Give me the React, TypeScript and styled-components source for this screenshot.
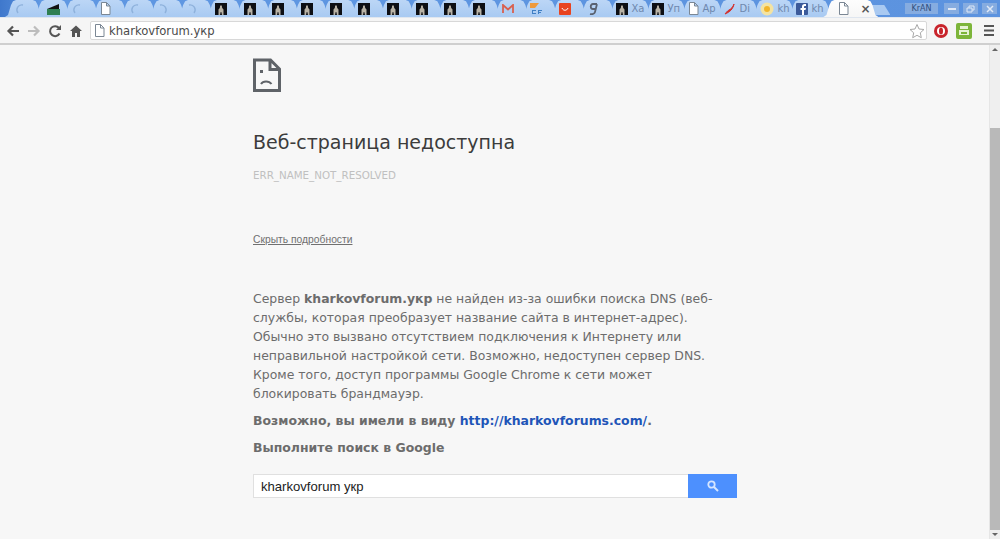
import React from "react";
import styled, { createGlobalStyle } from "styled-components";

const Global = createGlobalStyle`
  html, body { margin: 0; padding: 0; height: 100%; overflow: hidden; background: #f7f7f7; }
  #root { height: 100%; }
`;

const Shell = styled.div`
  width: 1000px; height: 539px; display: flex; flex-direction: column; overflow: hidden;
  font-family: "DejaVu Sans", sans-serif;
`;
const TabStrip = styled.div`
  height: 18px; flex: none; display: flex; align-items: flex-end; padding-left: 5px; box-sizing: border-box;
  background: linear-gradient(90deg, #3f78cc 0, #5f97e2 4%, #5c93df 100%);
  border-bottom: 1px solid #dfe6ef;
`;
const Tab = styled.div<{ $w: number; $active?: boolean }>`
  width: ${p => p.$w + 10}px; height: 17px; flex: none; display: flex; align-items: center; gap: 3px;
  margin-right: -10px; position: relative;
  padding-left: ${p => (p.$active ? 15 : 9)}px; box-sizing: border-box; overflow: hidden;
  background: ${p => (p.$active ? "linear-gradient(#fdfdfd,#f6f6f6)" : "linear-gradient(#bcd6f6,#a8caf2)")};
  clip-path: polygon(0 100%, 3px 88%, 6px 30%, 8px 8%, 11px 0, calc(100% - 11px) 0, calc(100% - 8px) 8%, calc(100% - 6px) 30%, calc(100% - 3px) 88%, 100% 100%);
  font-size: 10px; color: #6f88ad;
  z-index: ${p => (p.$active ? 2 : 1)};
`;
const TabGlyph = styled.svg<{ $shift?: number }>`
  flex: none; margin-left: ${p => p.$shift ?? 0}px;
`;
const CloseMark = styled.span` margin-left: 8px; color: #555; font-size: 12px; font-weight: 700; `;
const NewTab = styled.div`
  width: 22px; height: 10px; margin: 0 0 2px 0; background: #a9c9f1; flex: none;
  clip-path: polygon(0 0, 72% 0, 100% 100%, 14% 100%);
`;
const Spacer = styled.div` flex: 1; `;
const User = styled.div`
  width: 33px; height: 11px; margin: 3px 6px 0 0; background: #86ace0; color: #2f4e7c; flex: none;
  font-size: 8px; display: flex; align-items: center; justify-content: center; align-self: flex-start;
`;
const WinButtons = styled.div` display: flex; gap: 4px; align-self: flex-start; margin: 3px 3px 0 0; `;
const WinButton = styled.div`
  width: 15px; height: 11px; background: #86ace0; display: flex; align-items: center; justify-content: center;
`;
const Toolbar = styled.div`
  height: 25px; flex: none; display: flex; align-items: center; box-sizing: border-box;
  background: #f5f5f5; padding-left: 6px;
`;
const NavIcon = styled.svg` width: 14px; height: 14px; flex: none; margin-right: 7px; `;
const Omnibox = styled.div`
  width: 837px; height: 19px; margin: 0 6px 0 0; box-sizing: border-box; flex: none; background: #fff;
  border: 1px solid #d8d8d8; border-radius: 2px; display: flex; align-items: center; padding: 0 1px 0 3px; gap: 4px;
  font-size: 11.6px; color: #4a4a4a;
`;
const Url = styled.span` flex: 1; `;
const RightIcon = styled.svg` width: 16px; height: 16px; flex: none; margin-right: 7px; `;
const MenuIcon = styled.svg` width: 12px; height: 11px; flex: none; margin-left: 4px; `;
const Divider = styled.div` height: 2px; flex: none; background: #cfcfcf; `;
const Viewport = styled.div` flex: 1; min-height: 0; display: flex; background: #f7f7f7; `;
const Page = styled.main` flex: 1; padding: 13px 0 0 253px; color: #6c6c6c; overflow: hidden; `;
const Column = styled.div` width: 484px; `;
const SadIcon = styled.svg` width: 28px; height: 34px; display: block; `;
const Title = styled.h1`
  margin: 37px 0 0; font-size: 19px; line-height: 26px; font-weight: 400; color: #3c3c3c;
`;
const Code = styled.div` margin-top: 13px; font-size: 10.3px; line-height: 14px; color: #c0c0c0; `;
const Details = styled.div`
  margin-top: 51px; font: 10.3px/14px "Liberation Sans", Arial, sans-serif; color: #707070; text-decoration: underline;
`;
const Para = styled.p` margin: 0; font-size: 12.45px; line-height: 19px; `;
const Explain = styled(Para)` margin-top: 42px; width: 470px; `;
const Strong = styled(Para)` margin-top: 8px; font-weight: 700; `;
const Link = styled.span` color: #1f55b8; `;
const SearchRow = styled.div` display: flex; height: 24px; margin-top: 17px; `;
const SearchInput = styled.div`
  flex: 1; box-sizing: border-box; background: #fff; border: 1px solid #e0e0e0; border-right: 0;
  padding-left: 7px; display: flex; align-items: center; font: 13.1px "Liberation Sans", Arial, sans-serif; color: #222;
`;
const SearchButton = styled.div`
  width: 49px; background: #4d90fe; display: flex; align-items: center; justify-content: center;
`;
const ScrollTrack = styled.div`
  width: 11px; flex: none; background: #efefef; border-left: 1px solid #e6e6e6; display: flex; flex-direction: column; box-sizing: border-box;
`;
const ScrollArrow = styled.div<{ $up?: boolean }>`
  height: 9px; flex: none; display: flex; align-items: center; justify-content: center;
  &::after {
    content: ""; border-left: 3px solid transparent; border-right: 3px solid transparent;
    ${p => (p.$up ? "border-bottom: 3px solid #666;" : "border-top: 3px solid #666;")}
  }
`;
const ScrollGap = styled.div` height: 74px; flex: none; `;
const ScrollThumb = styled.div` flex: 1; background: #b9b9b9; `;

const Doc = () => (
  <TabGlyph width="11" height="13" viewBox="0 0 11 13"><path d="M1.500.5h5l3.500 3.500v8.500h-8.500z M6.500.5v3.500h3.500" fill="#fff" stroke="#7b8794" /></TabGlyph>
);
const Spin = ({ flip }: { flip?: boolean }) => (
  <TabGlyph width="12" height="12" viewBox="0 0 12 12"><path d={flip ? "M3 2a5 5 0 0 1 5 8" : "M9 2a5 5 0 0 0-5 8"} fill="none" stroke="#8fb2dc" strokeWidth="1.400" /></TabGlyph>
);
const Dark = () => (
  <TabGlyph width="12" height="12" viewBox="0 0 12 12"><rect width="12" height="12" fill="#0d0f14" /><path d="M5.200 2.500h1.600l.4 2.500 1.300 1.500V12h-1.500l-.7-3h-.6l-.7 3H3.500V6.500L4.800 5z" fill="#b9b3a6" /></TabGlyph>
);
const Green = () => (
  <TabGlyph $shift={3} width="14" height="12" viewBox="0 0 14 12"><path d="M1 6 13 1v5z" fill="#111" /><rect x="1" y="6" width="13" height="6" fill="#2f7f52" /></TabGlyph>
);
const Gmail = () => (
  <TabGlyph width="12" height="10" viewBox="0 0 12 10"><path d="M1 9V1l5 4.500 5-4.500v8" fill="none" stroke="#d9604f" strokeWidth="1.800" /></TabGlyph>
);
const CF = () => (
  <TabGlyph width="13" height="12" viewBox="0 0 13 12"><path d="M0 0h9L5 5H0z" fill="#ef9a3c" /><path d="M2 7h4v1H3v2h3v1H2zM8 7h4v1H9v1h2v1H9v1H8z" fill="#3f7fc4" /></TabGlyph>
);
const RedBox = () => (
  <TabGlyph width="12" height="12" viewBox="0 0 12 12"><rect width="12" height="12" rx="1" fill="#e8431f" /><path d="M3 5c1 3 5 3 6 0" fill="none" stroke="#fff" /></TabGlyph>
);
const Swirl = () => (
  <TabGlyph width="11" height="12" viewBox="0 0 11 12"><path d="M9 1H5C2 1 2 6 5 6h3M9 1 7 9c-.5 2-3 2.500-5 2" fill="none" stroke="#5a6270" strokeWidth="1.800" /></TabGlyph>
);
const Pen = () => (
  <TabGlyph width="12" height="12" viewBox="0 0 12 12"><path d="M10 1C9 6 6 9 1 11c1-1 2-3 4-4s4-3 5-6z" fill="#d3322e" stroke="#d3322e" /></TabGlyph>
);
const Sun = () => (
  <TabGlyph width="14" height="14" viewBox="0 0 14 14"><circle cx="7" cy="7" r="6.500" fill="#f3e3a2" /><circle cx="7" cy="7" r="3" fill="#f1b52b" /></TabGlyph>
);
const Fb = () => (
  <TabGlyph width="12" height="12" viewBox="0 0 12 12"><rect width="12" height="12" rx="1" fill="#3b5a9a" /><path d="M8 12V7h1.500L10 5H8V4c0-.6.300-1 1-1h1V1H8.500C7 1 6 2 6 3.500V5H4.500v2H6v5z" fill="#fff" /></TabGlyph>
);

const narrow: React.ReactNode[] = [
  <Spin key="a" />, <Green key="b" />, <Spin key="c" />, <Doc key="d" />, <Spin key="e" />, <Spin key="f" flip />, <Spin key="g" flip />,
  ...Array.from({ length: 10 }, (_, i) => <Dark key={"d" + i} />),
  <Gmail key="m" />, <CF key="cf" />, <RedBox key="r" />, <Swirl key="s" />,
];
const wide: [React.ReactNode, string][] = [
  [<Dark />, "Ха"], [<Dark />, "Уп"], [<Doc />, "Ap"], [<Pen />, "Di"], [<Sun />, "kh"], [<Fb />, "kh"],
];

export default function App() {
  return (
    <Shell>
      <Global />
      <TabStrip>
        {narrow.map((icon, i) => <Tab key={i} $w={28.7}>{icon}</Tab>)}
        {wide.map(([icon, label], i) => <Tab key={i} $w={36}>{icon}{label}</Tab>)}
        <Tab $w={45} $active><Doc /><CloseMark>×</CloseMark></Tab>
        <NewTab />
        <Spacer />
        <User>KrAN</User>
        <WinButtons>
          <WinButton><svg width="8" height="2"><rect width="8" height="2" fill="#dfe9f7" /></svg></WinButton>
          <WinButton><svg width="9" height="8" viewBox="0 0 9 8"><path d="M1 3h5v4H1zM3 3V1h5v4H6" fill="none" stroke="#dfe9f7" /></svg></WinButton>
          <WinButton><svg width="8" height="8" viewBox="0 0 8 8"><path d="M1 1l6 6M7 1 1 7" stroke="#dfe9f7" strokeWidth="1.500" /></svg></WinButton>
        </WinButtons>
      </TabStrip>
      <Toolbar>
        <NavIcon viewBox="0 0 14 14"><path d="M13 7H3M7 2.500 2.500 7 7 11.500" fill="none" stroke="#555" strokeWidth="2.200" /></NavIcon>
        <NavIcon viewBox="0 0 14 14"><path d="M1 7h10M7 2.500 11.500 7 7 11.500" fill="none" stroke="#bdbdbd" strokeWidth="2.200" /></NavIcon>
        <NavIcon viewBox="0 0 14 14"><path d="M11.500 9.500A5 5 0 1 1 11 4" fill="none" stroke="#555" strokeWidth="2" /><path d="M13 1v5H8z" fill="#555" /></NavIcon>
        <NavIcon viewBox="0 0 14 14"><path d="M7 1.500 1 7h2v6h3V9h2v4h3V7h2z" fill="#555" /></NavIcon>
        <Omnibox>
          <Doc />
          <Url>kharkovforum.укр</Url>
          <svg width="16" height="16" viewBox="0 0 16 16"><path d="m8 1.500 2 4.500 5 .5-3.700 3.300 1 4.900L8 12.300 3.700 14.700l1-4.900L1 6.500 6 6z" fill="#fff" stroke="#a8a8a8" /></svg>
        </Omnibox>
        <RightIcon viewBox="0 0 16 16"><circle cx="8" cy="8" r="7" fill="#c8242c" /><circle cx="8" cy="8" r="4" fill="#fff" /><ellipse cx="8" cy="8" rx="2" ry="3.500" fill="#c8242c" /></RightIcon>
        <RightIcon viewBox="0 0 16 16"><rect width="16" height="16" rx="2" fill="#7db53a" /><path d="M4 3h8v3H4zM3 7h10v5H3z" fill="#e6f3d4" /><rect x="5" y="9" width="6" height="2" fill="#7db53a" /></RightIcon>
        <MenuIcon viewBox="0 0 12 11"><path d="M1 0h10v2H1zM1 4.500h10v2H1zM1 9h10v2H1z" fill="#555" /></MenuIcon>
      </Toolbar>
      <Divider />
      <Viewport>
        <Page>
          <Column>
            <SadIcon viewBox="0 0 28 34">
              <path d="M1.500 2h16l9 9v21.500h-25z M17 2v9.500h9.500" fill="none" stroke="#5f6368" strokeWidth="3" />
              <rect x="7" y="12" width="3" height="3" fill="#5f6368" />
              <path d="M8 26c2-3.500 8-3.500 10.500 0" fill="none" stroke="#5f6368" strokeWidth="2" />
            </SadIcon>
            <Title>Веб-страница недоступна</Title>
            <Code>ERR_NAME_NOT_RESOLVED</Code>
            <Details>Скрыть подробности</Details>
            <Explain>
              Сервер <b>kharkovforum.укр</b> не найден из-за ошибки поиска DNS (веб-службы, которая преобразует название сайта в интернет-адрес). Обычно это вызвано отсутствием подключения к Интернету или неправильной настройкой сети. Возможно, недоступен сервер DNS. Кроме того, доступ программы Google Chrome к сети может блокировать брандмауэр.
            </Explain>
            <Strong>Возможно, вы имели в виду <Link>http://kharkovforums.com/</Link>.</Strong>
            <Strong>Выполните поиск в Google</Strong>
            <SearchRow>
              <SearchInput>kharkovforum укр</SearchInput>
              <SearchButton>
                <svg width="12" height="12" viewBox="0 0 12 12"><circle cx="4.500" cy="4.500" r="3.200" fill="none" stroke="#d6e6ff" strokeWidth="1.800" /><path d="m7 7 4 4" stroke="#d6e6ff" strokeWidth="2" /></svg>
              </SearchButton>
            </SearchRow>
          </Column>
        </Page>
        <ScrollTrack>
          <ScrollArrow $up />
          <ScrollGap />
          <ScrollThumb />
          <ScrollArrow />
        </ScrollTrack>
      </Viewport>
    </Shell>
  );
}
